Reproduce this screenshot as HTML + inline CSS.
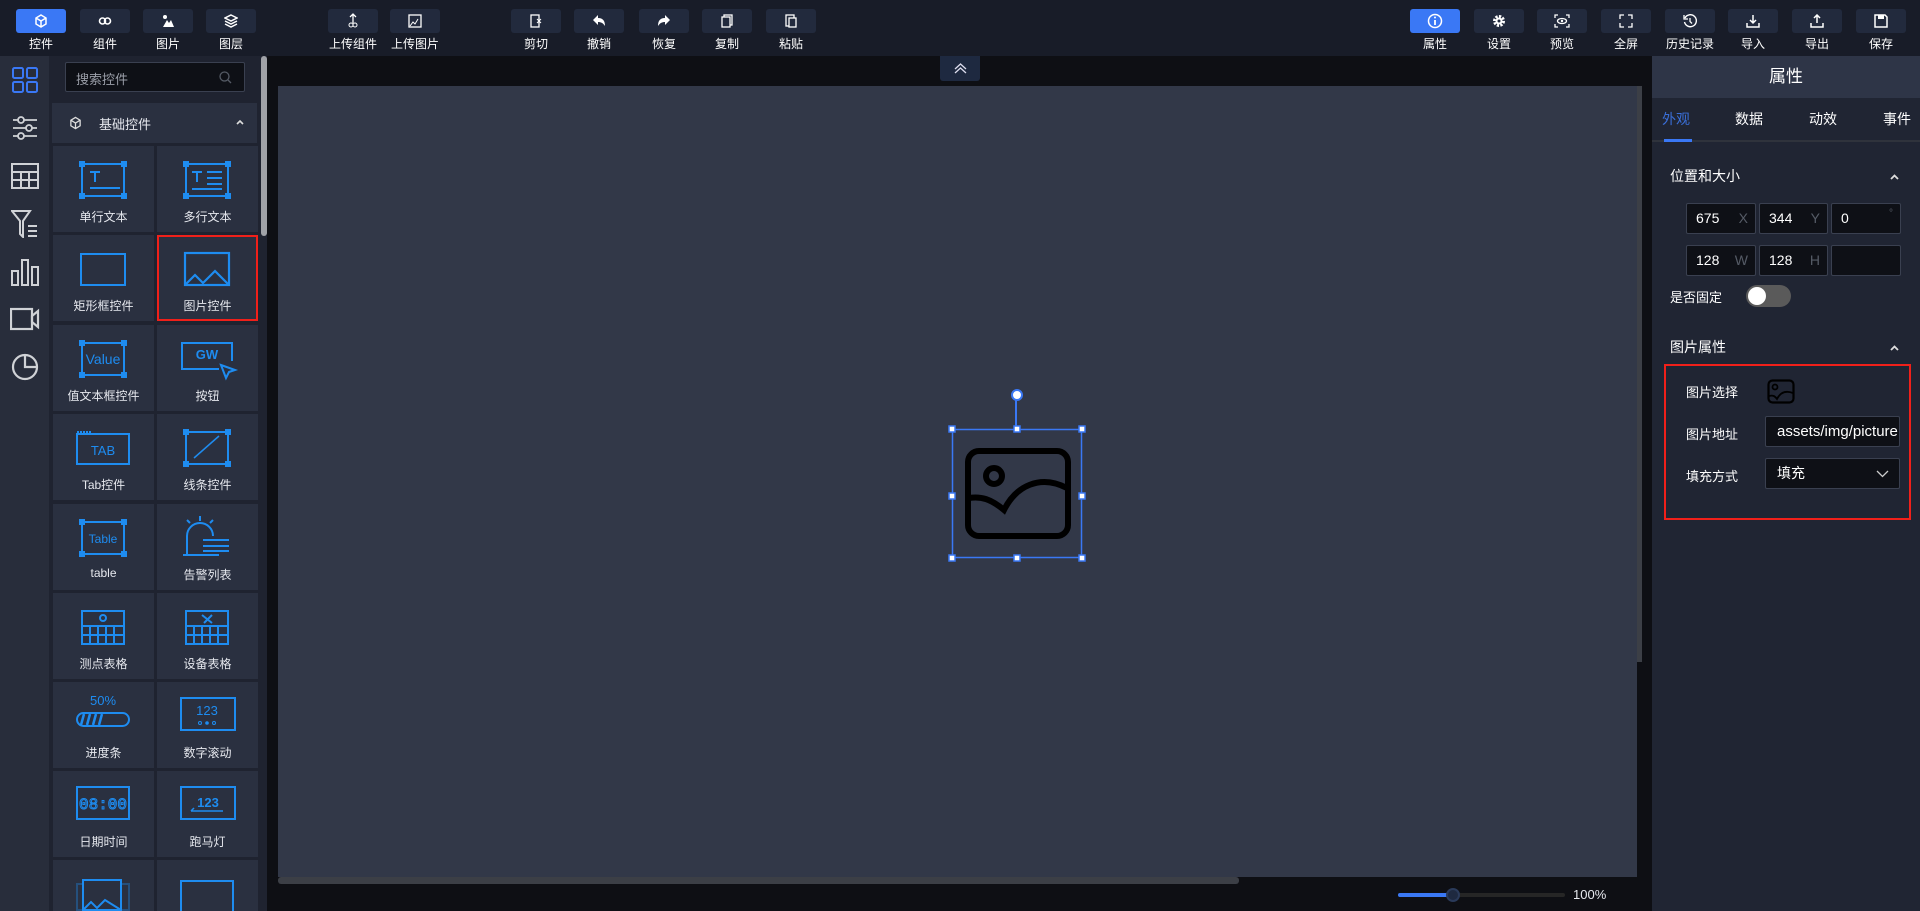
<!DOCTYPE html>
<html><head><meta charset="utf-8"><style>
*{box-sizing:border-box;margin:0;padding:0}
html{width:1920px;height:911px;overflow:hidden}
body{width:1920px;height:911px;overflow:hidden;background:#0e0f14;font-family:"Liberation Sans","Noto Sans CJK SC",sans-serif;color:#e6e8ee;position:relative}
.abs{position:absolute}
#top{left:0;top:0;width:1920px;height:56px;background:#181c28}
.tb{position:absolute;top:9px;width:50px;height:24px;background:#222a3d;border-radius:3px;display:flex;align-items:center;justify-content:center}
.tb.on{background:#3a78f5}
.tl{position:absolute;top:35px;width:80px;text-align:center;font-size:12px;color:#fff}
#lbar{left:0;top:56px;width:49px;height:855px;background:#282d3b}
#lpan{left:49px;top:56px;width:218px;height:855px;background:#1f2330;overflow:hidden}
#cells{position:absolute;left:0;top:0;width:267px;height:911px;overflow:hidden}
.cell{position:absolute;width:101px;height:86px;background:#2a3040}
.cell .lb{position:absolute;left:0;right:0;top:62px;text-align:center;font-size:12px;color:#e6e8ee}
.cell svg{position:absolute;left:25px;top:14px}
#rp{left:1652px;top:56px;width:268px;height:855px;background:#202533}
.inp{position:absolute;height:31px;background:#0e1016;border:1px solid #3a4050;border-radius:2px;font-size:14px;color:#fff;padding-left:9px;line-height:29px}
.inp span{position:absolute;right:7px;color:#555b66}
.lab{position:absolute;font-size:13px;color:#fff}
</style></head><body>
<div id="top" class="abs">
 <div class="tb on" style="left:16px"><svg width="14" height="14" viewBox="0 0 14 14" fill="none" stroke="#fff" stroke-width="1.5"><path d="M7 1l5 3v6l-5 3-5-3V4z M2 4l5 3 5-3 M7 7v6"/></svg></div><div class="tl" style="left:1px">控件</div>
 <div class="tb" style="left:80px"><svg width="14" height="10"><circle cx="4.5" cy="5" r="3" fill="none" stroke="#fff" stroke-width="1.6"/><circle cx="9.5" cy="5" r="3" fill="none" stroke="#fff" stroke-width="1.6"/></svg></div><div class="tl" style="left:65px">组件</div>
 <div class="tb" style="left:143px"><svg width="14" height="14"><circle cx="4" cy="3" r="2" fill="#fff"/><path d="M2 13l4-7 2 3 2-3 3 7z" fill="#fff"/></svg></div><div class="tl" style="left:128px">图片</div>
 <div class="tb" style="left:206px"><svg width="14" height="14"><path d="M7 1l6 3-6 3-6-3z M1 7l6 3 6-3 M1 10l6 3 6-3" fill="none" stroke="#fff" stroke-width="1.5"/></svg></div><div class="tl" style="left:191px">图层</div>
 <div class="tb" style="left:328px"><svg width="12" height="16"><path d="M6 1v9 M3 4l3-3 3 3" fill="none" stroke="#fff" stroke-width="1.3"/><circle cx="4" cy="12" r="2" fill="none" stroke="#fff"/><circle cx="8" cy="12" r="2" fill="none" stroke="#fff"/></svg></div><div class="tl" style="left:313px">上传组件</div>
 <div class="tb" style="left:390px"><svg width="14" height="14"><rect x="1" y="1" width="12" height="12" fill="none" stroke="#fff" stroke-width="1.3"/><path d="M2 12l3-4 2 2 3-5" fill="none" stroke="#fff"/></svg></div><div class="tl" style="left:375px">上传图片</div>
 <div class="tb" style="left:511px"><svg width="14" height="14"><rect x="2" y="1" width="8" height="12" fill="none" stroke="#fff" stroke-width="1.3"/><path d="M8 5l4 4M12 5l-4 4" stroke="#fff"/></svg></div><div class="tl" style="left:496px">剪切</div>
 <div class="tb" style="left:574px"><svg width="14" height="14"><path d="M1 6l5-5v3c5 0 7 3 7 8-2-3-4-4-7-4v3z" fill="#fff"/></svg></div><div class="tl" style="left:559px">撤销</div>
 <div class="tb" style="left:639px"><svg width="14" height="14"><path d="M13 6l-5-5v3C3 4 1 7 1 12c2-3 4-4 7-4v3z" fill="#fff"/></svg></div><div class="tl" style="left:624px">恢复</div>
 <div class="tb" style="left:702px"><svg width="12" height="14"><rect x="3" y="1" width="8" height="10" fill="none" stroke="#fff" stroke-width="1.3"/><rect x="1" y="3" width="8" height="10" fill="#222a3d" stroke="#fff" stroke-width="1.3"/></svg></div><div class="tl" style="left:687px">复制</div>
 <div class="tb" style="left:766px"><svg width="12" height="14"><rect x="1" y="1" width="8" height="11" fill="none" stroke="#fff" stroke-width="1.3"/><rect x="4" y="4" width="7" height="9" fill="#222a3d" stroke="#fff" stroke-width="1.3"/></svg></div><div class="tl" style="left:751px">粘贴</div>

 <div class="tb on" style="left:1410px"><svg width="16" height="16"><circle cx="8" cy="8" r="6.5" fill="none" stroke="#fff" stroke-width="1.5"/><path d="M8 7v5" stroke="#fff" stroke-width="1.8"/><circle cx="8" cy="4.5" r="1" fill="#fff"/></svg></div><div class="tl" style="left:1395px">属性</div>
 <div class="tb" style="left:1474px"><svg width="14" height="14"><circle cx="7" cy="7" r="4.5" fill="none" stroke="#fff" stroke-width="3" stroke-dasharray="2.2 1.3"/><circle cx="7" cy="7" r="3.5" fill="#fff"/><circle cx="7" cy="7" r="1.5" fill="#222a3d"/></svg></div><div class="tl" style="left:1459px">设置</div>
 <div class="tb" style="left:1537px"><svg width="16" height="14"><path d="M1 4V1h3M12 1h3v3M15 10v3h-3M4 13H1v-3" fill="none" stroke="#fff" stroke-width="1.3"/><ellipse cx="8" cy="7" rx="4.5" ry="2.5" fill="none" stroke="#fff" stroke-width="1.3"/><circle cx="8" cy="7" r="1.2" fill="#fff"/></svg></div><div class="tl" style="left:1522px">预览</div>
 <div class="tb" style="left:1601px"><svg width="14" height="14"><path d="M1 5V1h4M9 1h4v4M13 9v4H9M5 13H1V9" fill="none" stroke="#fff" stroke-width="1.3"/></svg></div><div class="tl" style="left:1586px">全屏</div>
 <div class="tb" style="left:1665px"><svg width="14" height="14"><path d="M2 4A6 6 0 1 1 1.5 8" fill="none" stroke="#fff" stroke-width="1.4"/><path d="M1 1v4h4" fill="none" stroke="#fff" stroke-width="1.3"/><path d="M7 4v3.5l2 2" fill="none" stroke="#fff" stroke-width="1.3"/></svg></div><div class="tl" style="left:1650px">历史记录</div>
 <div class="tb" style="left:1728px"><svg width="14" height="14"><path d="M7 1v8M4 6l3 3 3-3" fill="none" stroke="#fff" stroke-width="1.5"/><path d="M1 9v4h12V9" fill="none" stroke="#fff" stroke-width="1.5"/></svg></div><div class="tl" style="left:1713px">导入</div>
 <div class="tb" style="left:1792px"><svg width="14" height="14"><path d="M7 9V1M4 4l3-3 3 3" fill="none" stroke="#fff" stroke-width="1.5"/><path d="M1 9v4h12V9" fill="none" stroke="#fff" stroke-width="1.5"/></svg></div><div class="tl" style="left:1777px">导出</div>
 <div class="tb" style="left:1856px"><svg width="14" height="14"><path d="M1 1h10l2 2v10H1z" fill="none" stroke="#fff" stroke-width="1.5"/><rect x="4" y="1" width="6" height="4" fill="#fff"/></svg></div><div class="tl" style="left:1841px">保存</div>
</div>

<div id="lbar" class="abs">
 <svg class="abs" style="left:12px;top:11px" width="26" height="26"><g fill="none" stroke="#3a78f5" stroke-width="2"><rect x="1" y="1" width="10" height="10" rx="1.5"/><rect x="15" y="1" width="10" height="10" rx="1.5"/><rect x="1" y="15" width="10" height="10" rx="1.5"/><rect x="15" y="15" width="10" height="10" rx="1.5"/></g></svg>
 <svg class="abs" style="left:12px;top:59px" width="26" height="26"><g fill="none" stroke="#d0d2d6" stroke-width="1.8"><path d="M1 5h24M1 13h24M1 21h24"/><circle cx="9" cy="5" r="3" fill="#282d3b"/><circle cx="17" cy="13" r="3" fill="#282d3b"/><circle cx="9" cy="21" r="3" fill="#282d3b"/></g></svg>
 <svg class="abs" style="left:11px;top:107px" width="28" height="26"><g fill="none" stroke="#d0d2d6" stroke-width="2"><rect x="1" y="1" width="26" height="24"/><path d="M1 9h26M1 17h26M10 9v16M18 9v16"/></g></svg>
 <svg class="abs" style="left:11px;top:154px" width="28" height="28"><g fill="none" stroke="#d0d2d6" stroke-width="2"><path d="M1 1h18l-7 10v16l-3-3V11z"/><path d="M17 16h9M17 21h9M17 26h9"/></g></svg>
 <svg class="abs" style="left:11px;top:202px" width="28" height="28"><g fill="none" stroke="#d0d2d6" stroke-width="2"><rect x="1" y="13" width="6" height="14"/><rect x="11" y="2" width="6" height="25"/><rect x="21" y="9" width="6" height="18"/></g></svg>
 <svg class="abs" style="left:10px;top:251px" width="30" height="24"><g fill="none" stroke="#d0d2d6" stroke-width="2.2"><rect x="1" y="2" width="21" height="20"/><path d="M22 9l6-5v16l-6-5z"/></g></svg>
 <svg class="abs" style="left:11px;top:297px" width="28" height="28"><g fill="none" stroke="#d0d2d6" stroke-width="2.2"><circle cx="14" cy="14" r="12"/><path d="M14 2v12h12"/></g></svg>
</div>

<div id="lpan" class="abs">
 <div class="abs" style="left:16px;top:6px;width:180px;height:30px;background:#0e1016;border:1px solid #3a4050;border-radius:2px;font-size:13px;color:#9a9ea8;padding:6px 10px">搜索控件<svg class="abs" style="right:12px;top:8px" width="13" height="13"><circle cx="5.5" cy="5.5" r="4.5" fill="none" stroke="#555b66" stroke-width="1.3"/><path d="M9 9l3 3" stroke="#555b66" stroke-width="1.3"/></svg></div>
 <div class="abs" style="left:3px;top:47px;width:205px;height:40px;background:#2a3040;font-size:13px;color:#e6e8ee">
  <svg class="abs" style="left:17px;top:13px" width="13" height="14" viewBox="0 0 14 14" fill="none" stroke="#ddd" stroke-width="1.4"><path d="M7 1l5 3v6l-5 3-5-3V4z M2 4l5 3 5-3 M7 7v6"/></svg>
  <span class="abs" style="left:47px;top:11px">基础控件</span>
  <svg class="abs" style="left:184px;top:16px" width="8" height="6"><path d="M1 5l3-3 3 3" fill="none" stroke="#ddd" stroke-width="1.6"/></svg>
 </div>
 <div class="abs" style="left:212px;top:0;width:6px;height:180px;background:#c0c2c6;border-radius:3px;opacity:.8"></div>
</div>

<div id="cells">
<div class="cell" style="left:53px;top:146px"><svg width="50" height="40"><g fill="none" stroke="#1e8cf0" stroke-width="2"><rect x="4" y="4" width="42" height="32"/><path d="M12 12h10M17 12v10M12 28h30"/></g><g fill="#1e8cf0"><rect x="1" y="1" width="6" height="6"/><rect x="43" y="1" width="6" height="6"/><rect x="1" y="33" width="6" height="6"/><rect x="43" y="33" width="6" height="6"/></g></svg><div class="lb">单行文本</div></div>
<div class="cell" style="left:157px;top:146px"><svg width="50" height="40"><g fill="none" stroke="#1e8cf0" stroke-width="2"><rect x="4" y="4" width="42" height="32"/><path d="M10 12h10M15 12v10M25 12h15M25 18h15M25 24h15M10 29h30"/></g><g fill="#1e8cf0"><rect x="1" y="1" width="6" height="6"/><rect x="43" y="1" width="6" height="6"/><rect x="1" y="33" width="6" height="6"/><rect x="43" y="33" width="6" height="6"/></g></svg><div class="lb">多行文本</div></div>
<div class="cell" style="left:53px;top:235px"><svg width="50" height="40"><rect x="3" y="5" width="44" height="31" fill="none" stroke="#1e8cf0" stroke-width="2"/></svg><div class="lb">矩形框控件</div></div>
<div class="cell" style="left:157px;top:235px;border:2px solid #f0201a"><svg width="50" height="40" style="left:23px;top:12px"><g fill="none" stroke="#1e8cf0" stroke-width="2.2"><rect x="3" y="4" width="44" height="32"/><path d="M3 36l10-10 8 8 12-12 14 14"/></g></svg><div class="lb" style="top:60px">图片控件</div></div>
<div class="cell" style="left:53px;top:325px"><svg width="50" height="40"><rect x="4" y="4" width="42" height="32" fill="none" stroke="#1e8cf0" stroke-width="2"/><g fill="#1e8cf0"><rect x="1" y="1" width="6" height="6"/><rect x="43" y="1" width="6" height="6"/><rect x="1" y="33" width="6" height="6"/><rect x="43" y="33" width="6" height="6"/></g><text x="25" y="25" font-size="14" fill="#1e8cf0" text-anchor="middle" font-family="Liberation Sans">Value</text></svg><div class="lb">值文本框控件</div></div>
<div class="cell" style="left:157px;top:325px"><svg width="60" height="44" style="left:22px"><path d="M40 30H3V4h50v18" fill="none" stroke="#1e8cf0" stroke-width="2"/><text x="28" y="20" font-size="13" font-weight="bold" fill="#1e8cf0" text-anchor="middle" font-family="Liberation Sans">GW</text><path d="M42 26l14 5-6 2-3 6z" fill="none" stroke="#1e8cf0" stroke-width="2"/></svg><div class="lb">按钮</div></div>
<div class="cell" style="left:53px;top:414px"><svg width="56" height="40" style="left:22px"><path d="M2 4h14" stroke="#1e8cf0" stroke-width="2" stroke-dasharray="2 1"/><rect x="2" y="6" width="52" height="30" fill="none" stroke="#1e8cf0" stroke-width="2"/><text x="28" y="27" font-size="13" fill="#1e8cf0" text-anchor="middle" font-family="Liberation Sans">TAB</text></svg><div class="lb">Tab控件</div></div>
<div class="cell" style="left:157px;top:414px"><svg width="50" height="40"><rect x="4" y="4" width="42" height="32" fill="none" stroke="#1e8cf0" stroke-width="2"/><path d="M12 30l25-22" stroke="#1e8cf0" stroke-width="1.5"/><g fill="#1e8cf0"><rect x="1" y="1" width="6" height="6"/><rect x="43" y="1" width="6" height="6"/><rect x="1" y="33" width="6" height="6"/><rect x="43" y="33" width="6" height="6"/></g></svg><div class="lb">线条控件</div></div>
<div class="cell" style="left:53px;top:504px"><svg width="50" height="40"><rect x="4" y="4" width="42" height="32" fill="none" stroke="#1e8cf0" stroke-width="2"/><g fill="#1e8cf0"><rect x="1" y="1" width="6" height="6"/><rect x="43" y="1" width="6" height="6"/><rect x="1" y="33" width="6" height="6"/><rect x="43" y="33" width="6" height="6"/></g><text x="25" y="25" font-size="12" fill="#1e8cf0" text-anchor="middle" font-family="Liberation Sans">Table</text></svg><div class="lb">table</div></div>
<div class="cell" style="left:157px;top:504px"><svg width="52" height="44" style="left:24px;top:10px"><g fill="none" stroke="#1e8cf0" stroke-width="2"><path d="M6 40V22a13 13 0 0 1 26 0"/><path d="M2 41h36M22 26h26M22 32h26M22 37h26M19 2v5M6 6l3 3M32 6l-3 3"/></g></svg><div class="lb">告警列表</div></div>
<div class="cell" style="left:53px;top:593px"><svg width="50" height="40"><g fill="none" stroke="#1e8cf0" stroke-width="2"><rect x="4" y="4" width="42" height="33"/><path d="M4 19h42M4 28h42M12 19v18M20 19v18M28 19v18M36 19v18"/><circle cx="25" cy="11" r="3"/></g></svg><div class="lb">测点表格</div></div>
<div class="cell" style="left:157px;top:593px"><svg width="50" height="40"><g fill="none" stroke="#1e8cf0" stroke-width="2"><rect x="4" y="4" width="42" height="33"/><path d="M4 19h42M4 28h42M12 19v18M20 19v18M28 19v18M36 19v18M20 8l10 8M30 8l-8 8"/></g></svg><div class="lb">设备表格</div></div>
<div class="cell" style="left:53px;top:682px"><svg width="60" height="44" style="left:22px;top:10px"><text x="28" y="13" font-size="13" fill="#1e8cf0" text-anchor="middle" font-family="Liberation Sans">50%</text><rect x="2" y="21" width="52" height="13" rx="6.5" fill="none" stroke="#1e8cf0" stroke-width="2"/><path d="M6 33l3-11M12 33l3-11M18 33l3-11M24 33l3-11" stroke="#1e8cf0" stroke-width="2.5"/></svg><div class="lb">进度条</div></div>
<div class="cell" style="left:157px;top:682px"><svg width="60" height="44" style="left:22px;top:14px"><rect x="2" y="2" width="54" height="32" fill="none" stroke="#1e8cf0" stroke-width="2"/><text x="28" y="19" font-size="13" fill="#1e8cf0" text-anchor="middle" font-family="Liberation Sans">123</text><circle cx="21" cy="27" r="1.5" fill="none" stroke="#1e8cf0"/><circle cx="28" cy="27" r="1.8" fill="#1e8cf0"/><circle cx="35" cy="27" r="1.5" fill="none" stroke="#1e8cf0"/></svg><div class="lb">数字滚动</div></div>
<div class="cell" style="left:53px;top:771px"><svg width="60" height="44" style="left:22px;top:14px"><rect x="2" y="2" width="52" height="32" fill="none" stroke="#1e8cf0" stroke-width="2"/><text x="28" y="24" font-size="16" fill="none" stroke="#1e8cf0" stroke-width="1" text-anchor="middle" font-family="Liberation Mono">08:00</text></svg><div class="lb">日期时间</div></div>
<div class="cell" style="left:157px;top:771px"><svg width="60" height="44" style="left:22px;top:14px"><rect x="2" y="2" width="54" height="32" fill="none" stroke="#1e8cf0" stroke-width="2"/><text x="29" y="22" font-size="13" font-weight="bold" fill="#1e8cf0" text-anchor="middle" font-family="Liberation Sans">123</text><path d="M12 26h32M12 26l3-3" fill="none" stroke="#1e8cf0" stroke-width="1.5"/></svg><div class="lb">跑马灯</div></div>
<div class="cell" style="left:53px;top:860px"><svg width="60" height="44" style="left:22px;top:18px"><rect x="2" y="6" width="52" height="26" fill="none" stroke="#1e8cf0" stroke-opacity=".35" stroke-width="2"/><rect x="8" y="2" width="38" height="30" fill="#2a3040" stroke="#1e8cf0" stroke-width="2"/><path d="M8 32l8-8 6 6 8-8 16 10" fill="none" stroke="#1e8cf0" stroke-width="2"/></svg></div>
<div class="cell" style="left:157px;top:860px"><svg width="60" height="44" style="left:22px;top:18px"><rect x="2" y="3" width="52" height="36" fill="none" stroke="#1e8cf0" stroke-width="2"/></svg></div>
</div>

<div class="abs" style="left:940px;top:56px;width:40px;height:25px;background:#1e2940;border-radius:0 0 3px 3px"><svg class="abs" style="left:14px;top:7px" width="13" height="11"><path d="M1 6l5.5-5 5.5 5M1 10l5.5-5 5.5 5" fill="none" stroke="#dde" stroke-width="1.3"/></svg></div>
<div class="abs" style="left:278px;top:86px;width:1359px;height:791px;background:#323848"></div>
<div class="abs" style="left:1637px;top:86px;width:5px;height:576px;background:#3c3f46"></div>
<div class="abs" style="left:278px;top:877px;width:961px;height:7px;background:#3c3f46;border-radius:3px"></div>
<svg class="abs" style="left:940px;top:385px" width="160" height="185">
 <path d="M76 10v32" stroke="#3a78f5" stroke-width="2"/>
 <circle cx="77" cy="10" r="5" fill="#fff" stroke="#3a78f5" stroke-width="2"/>
 <rect x="12.5" y="44.5" width="129" height="128" fill="none" stroke="#3a78f5" stroke-width="1.5"/>
 <rect x="28" y="66" width="100" height="85" rx="11" fill="none" stroke="#000" stroke-width="6"/>
 <circle cx="54" cy="91" r="8" fill="none" stroke="#000" stroke-width="6"/>
 <path d="M29 113c12-2 22 1 35 12 12-24 36-36 63-22" fill="none" stroke="#000" stroke-width="6" stroke-linecap="round"/>
 <g fill="#fff" stroke="#3a78f5" stroke-width="1.5"><rect x="9" y="41" width="6" height="6"/><rect x="74" y="41" width="6" height="6"/><rect x="139" y="41" width="6" height="6"/><rect x="9" y="108" width="6" height="6"/><rect x="139" y="108" width="6" height="6"/><rect x="9" y="170" width="6" height="6"/><rect x="74" y="170" width="6" height="6"/><rect x="139" y="170" width="6" height="6"/></g>
</svg>
<div class="abs" style="left:1398px;top:893px;width:167px;height:4px;background:#262626;border-radius:2px"></div>
<div class="abs" style="left:1398px;top:893px;width:55px;height:4px;background:#3a78f5;border-radius:2px"></div>
<div class="abs" style="left:1446px;top:888px;width:14px;height:14px;border-radius:50%;background:#1e2940;border:2px solid #2a3a5a"></div>
<div class="abs" style="left:1573px;top:887px;font-size:13px;color:#e6e8ee">100%</div>

<div id="rp" class="abs">
 <div class="abs" style="left:0;top:0;width:268px;height:42px;background:#2e3547;text-align:center;font-size:17px;line-height:42px;color:#fff">属性</div>
 <div class="abs" style="left:0;top:41px;width:268px;height:45px;border-bottom:2px solid #2f333c"></div>
 <div class="lab" style="left:10px;top:53px;font-size:14px;color:#3a6fd8">外观</div>
 <div class="lab" style="left:83px;top:53px;font-size:14px">数据</div>
 <div class="lab" style="left:157px;top:53px;font-size:14px">动效</div>
 <div class="lab" style="left:231px;top:53px;font-size:14px">事件</div>
 <div class="abs" style="left:12px;top:83px;width:28px;height:3px;background:#3a78f5"></div>
 <div class="lab" style="left:18px;top:110px;font-size:14px">位置和大小</div>
 <svg class="abs" style="left:238px;top:118px" width="9" height="6"><path d="M1 5l3.5-3.5L8 5" fill="none" stroke="#ddd" stroke-width="1.8"/></svg>
 <div class="inp" style="left:34px;top:147px;width:70px">675<span>X</span></div>
 <div class="inp" style="left:107px;top:147px;width:69px">344<span>Y</span></div>
 <div class="inp" style="left:179px;top:147px;width:70px">0<span style="top:-5px;font-size:10px">°</span></div>
 <div class="inp" style="left:34px;top:189px;width:70px">128<span>W</span></div>
 <div class="inp" style="left:107px;top:189px;width:69px">128<span>H</span></div>
 <div class="inp" style="left:179px;top:189px;width:70px"></div>
 <div class="lab" style="left:18px;top:231px">是否固定</div>
 <div class="abs" style="left:94px;top:229px;width:45px;height:22px;border-radius:11px;background:#5a5a5a"></div>
 <div class="abs" style="left:96px;top:231px;width:18px;height:18px;border-radius:50%;background:#fff"></div>
 <div class="lab" style="left:18px;top:281px;font-size:14px">图片属性</div>
 <svg class="abs" style="left:238px;top:289px" width="9" height="6"><path d="M1 5l3.5-3.5L8 5" fill="none" stroke="#ddd" stroke-width="1.8"/></svg>
 <div class="abs" style="left:12px;top:308px;width:247px;height:156px;border:2px solid #f0201a"></div>
 <div class="lab" style="left:34px;top:326px">图片选择</div>
 <svg class="abs" style="left:115px;top:323px" width="28" height="25"><rect x="1.5" y="1.5" width="25" height="22" rx="4" fill="none" stroke="#000" stroke-width="2.2"/><circle cx="8" cy="8" r="2.5" fill="none" stroke="#000" stroke-width="1.8"/><path d="M2 17c4-1 6 0 8 3 3-6 8-9 16-6" fill="none" stroke="#000" stroke-width="1.8"/></svg>
 <div class="lab" style="left:34px;top:368px">图片地址</div>
 <div class="inp" style="left:113px;top:360px;width:135px;overflow:hidden;white-space:nowrap;padding-left:11px;font-size:15px">assets/img/picture</div>
 <div class="lab" style="left:34px;top:410px">填充方式</div>
 <div class="inp" style="left:113px;top:402px;width:135px;padding-left:11px">填充<svg class="abs" style="right:10px;top:11px" width="13" height="8"><path d="M1 1l5.5 5.5L12 1" fill="none" stroke="#ccc" stroke-width="1.3"/></svg></div>
</div>
</body></html>
